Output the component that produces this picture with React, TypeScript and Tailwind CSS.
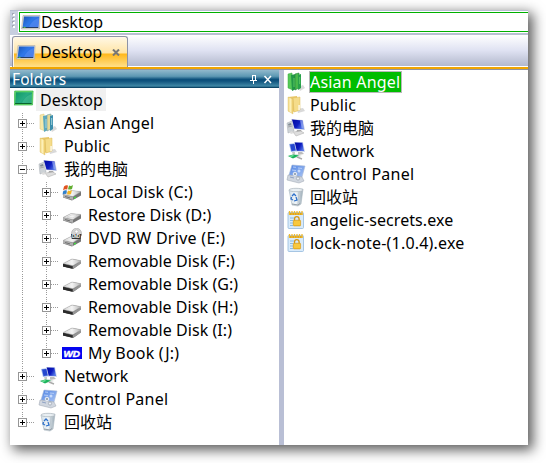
import React from "react";

const dots = "#9a9a9a";

function Defs() {
  return (
    <svg width="0" height="0" className="absolute">
      <defs>
        <linearGradient id="blueScreen" x1="0" y1="0" x2="1" y2="0.6">
          <stop offset="0" stopColor="#1a55b8" />
          <stop offset="0.55" stopColor="#2f78e8" />
          <stop offset="1" stopColor="#3b6be0" />
        </linearGradient>
        <linearGradient id="greenScreen" x1="0" y1="0" x2="1" y2="0.6">
          <stop offset="0" stopColor="#0f9a62" />
          <stop offset="0.6" stopColor="#27ab82" />
          <stop offset="1" stopColor="#139a66" />
        </linearGradient>
        <linearGradient id="navy" x1="0" y1="0" x2="1" y2="0.5">
          <stop offset="0" stopColor="#0008a0" />
          <stop offset="0.6" stopColor="#0d1cc0" />
          <stop offset="1" stopColor="#4f70e4" />
        </linearGradient>
        <linearGradient id="folder" x1="0" y1="0" x2="1" y2="0">
          <stop offset="0" stopColor="#f3d983" />
          <stop offset="0.5" stopColor="#fdf0b8" />
          <stop offset="1" stopColor="#edca62" />
        </linearGradient>
        <linearGradient id="disk" x1="0" y1="0" x2="1" y2="0">
          <stop offset="0" stopColor="#d4d4d4" />
          <stop offset="0.5" stopColor="#f4f4f4" />
          <stop offset="1" stopColor="#b5b5b5" />
        </linearGradient>
        <linearGradient id="diskDark" x1="0" y1="0" x2="1" y2="0">
          <stop offset="0" stopColor="#222" />
          <stop offset="0.5" stopColor="#444" />
          <stop offset="1" stopColor="#aaa" />
        </linearGradient>
        <linearGradient id="panel" x1="0" y1="0" x2="1" y2="1">
          <stop offset="0" stopColor="#4f83e2" />
          <stop offset="1" stopColor="#a9c4f4" />
        </linearGradient>
        <linearGradient id="bin" x1="0" y1="0" x2="1" y2="0">
          <stop offset="0" stopColor="#d3dfe8" />
          <stop offset="0.5" stopColor="#f1f6f9" />
          <stop offset="1" stopColor="#98a8b3" />
        </linearGradient>
      </defs>
    </svg>
  );
}

type Kind =
  | "screen" | "greenScreen" | "user" | "greenUser" | "folder" | "computer" | "network"
  | "panel" | "bin" | "winDisk" | "disk" | "dvd" | "usb" | "wd" | "lock";

function Drawing({ kind }: { kind: Kind }) {
  switch (kind) {
    case "screen":
      return (
        <>
          <path d="M2 3.5H19L18.500 17H.5z" fill="#dcdad4" stroke="#b4b2aa" strokeWidth=".7" />
          <path d="M3 4.500H18.300L17.500 15H1.700z" fill="url(#blueScreen)" />
          <path d="M8 15C10 10 14 7 18 6L17.300 15z" fill="#5b96f5" opacity=".5" />
          <path d="M1.600 15h15.800v1H1.500z" fill="#243c66" />
          <path d="M2.500 15.300h2" stroke="#59d34c" />
        </>
      );
    case "greenScreen":
      return (
        <>
          <path d="M.7 3h18.400l-.6 14H0z" fill="#6ddb6a" stroke="#35b64a" strokeWidth=".7" />
          <path d="M1.800 4.300H18l-.5 10.800H1.200z" fill="url(#greenScreen)" />
          <path d="M8 15C10 10 14 7 18 6l-.5 9z" fill="#4fc39c" opacity=".5" />
          <path d="M1.200 15h16.500v1H1z" fill="#08652c" />
        </>
      );
    case "user":
    case "greenUser": {
      const g = kind === "greenUser";
      return (
        <>
          <path d="M12 15l5-2 2 3-5 3z" fill="#bbb" opacity=".55" />
          <path d="M2 2l4-1 1 17-5-2z" fill={g ? "#55c957" : "#f7e8a9"} stroke={g ? "#36a83e" : "#dfc779"} strokeWidth=".5" />
          <path d="M5 3l5-1v15l-4 2z" fill={g ? "#229747" : "#5da8bd"} />
          <path d="M9 2l4-1v15l-4 2z" fill={g ? "#48b94b" : "#e5d896"} stroke={g ? "#20823a" : "#6b9da9"} strokeWidth=".6" />
          <path d="M12 3l3-1v14l-3 2z" fill={g ? "#28a14b" : "#3c8eac"} />
          <path d="M8 6v9M13.700 5v7" stroke={g ? "#69d269" : "#bee3e7"} strokeWidth=".8" />
        </>
      );
    }
    case "folder":
      return (
        <>
          <path d="M11 14l6-1 2 3-7 2z" fill="#b9b9b9" opacity=".55" />
          <path d="M2 2l9-1 1 15-8 1-2-1z" fill="#e8c667" />
          <path d="M7 3l7-1v13l-6 2z" fill="#f5dc8a" stroke="#dfbd5a" strokeWidth=".5" />
          <path d="M2 2l5 2v15l-5-3z" fill="url(#folder)" stroke="#dbbd66" strokeWidth=".4" />
          <path d="M12.500 10l1.200 0v5l-1.200 .5z" fill="#fff" />
        </>
      );
    case "computer":
      return (
        <>
          <path d="M1 5l5-2 2 10-6 2z" fill="#cdd2d6" stroke="#a5abb0" strokeWidth=".5" />
          <path d="M2 6l3-1 .5 2-3 .8z" fill="#808a93" />
          <path d="M2 9l4-1" stroke="#888" strokeWidth=".6" />
          <path d="M5 1l12 1 2 10-11-1z" fill="#cfd3e6" />
          <path d="M6 1.600l10.500.9 1.400 8.700-9.400-.8z" fill="url(#navy)" />
          <path d="M14 2.600l2.500.2 1.300 8-2-.2z" fill="#a7baf5" opacity=".6" />
          <path d="M11 12h4l1 2-6 1z" fill="#a6a6a6" />
          <path d="M7 14l8-1 3 2-8 3z" fill="#dedede" stroke="#a8a8a8" strokeWidth=".5" />
          <path d="M3 14l3-1 2 2-3 1z" fill="#ddd" />
        </>
      );
    case "network":
      return (
        <>
          <path d="M3 3l7-1 2 8-7 1z" fill="#9bb5ec" />
          <path d="M4 3.500l6-.7 1 6.500-5.500.7z" fill="#2547cf" />
          <path d="M8 1l9 0 2 10-9-.5z" fill="#ccd5ec" />
          <path d="M8.800 1.600l7.600.1 1.600 8.400-7.300-.4z" fill="url(#navy)" />
          <path d="M12 11h4l2 2-6 1z" fill="#bcbcbc" />
          <path d="M6 11h3v3H7z" fill="#c8c8c8" />
          <path d="M1 15l10-2 5 2-7 2z" fill="#d8dedb" />
          <path d="M2 15l5-1.500 6 1-6 3z" fill="#19b35b" />
          <path d="M3 15l4-1 1 1-3 1z" fill="#73df9b" />
          <path d="M11 16l5 2" stroke="#aaa" strokeWidth="1.5" />
        </>
      );
    case "panel":
      return (
        <>
          <path d="M6 1l13 1-3 11-13-2z" fill="url(#panel)" stroke="#a7b8d6" strokeWidth=".6" />
          <path d="M2 11l14 2 2 4-5 2-12-3z" fill="#d0d6df" stroke="#9ba3ae" strokeWidth=".5" />
          <path d="M7 3l3 .3M6 6l4 .5M12 4l4 .4" stroke="#b5cdf8" />
          <circle cx="13" cy="7" r="1.500" fill="#c9dcfb" />
          <circle cx="9" cy="10" r="1.800" fill="#9daab8" stroke="#edf2f8" />
          <circle cx="12" cy="14.500" r="1.600" fill="#eef1f5" stroke="#8c97a4" strokeWidth=".6" />
          <path d="M4 13l4 1" stroke="#8fa2c4" />
        </>
      );
    case "bin":
      return (
        <>
          <path d="M3 3l14-1-2 15-3 2-6-1z" fill="url(#bin)" stroke="#aab7c0" strokeWidth=".6" />
          <ellipse cx="10" cy="3" rx="7" ry="1.700" fill="#e9eff3" stroke="#a9b3ba" strokeWidth=".7" />
          <path d="M13 5l-1 12M15 5l-1.500 11" stroke="#b1bfc8" strokeWidth=".7" />
          <path d="M6 9l2-2 2 2M10 10l1 3-3 1M7 13l-2-1 .5-2" stroke="#2e70c9" strokeWidth="1.300" fill="none" />
          <path d="M6 17l6 1 2-1.500" stroke="#7e8890" strokeWidth=".8" fill="none" />
        </>
      );
    case "winDisk":
    case "disk":
    case "dvd":
      return (
        <>
          <path d="M1 12.500l8-4 10 1v4l-9 5-9-3z" fill="#757575" />
          <path d="M1 12.500l8-4 10 1-8 5z" fill="url(#disk)" stroke="#aaa" strokeWidth=".4" />
          <path d="M1 12.500l10 2.500v3L1 15.300z" fill="#b0b0b0" />
          <path d="M3 14.500l5 1.400" stroke="#555" strokeWidth=".7" />
          {kind === "disk" && <path d="M5 12.300l5-2.500 5 .6-4.500 2.500z" fill="#f3f3f3" stroke="#bbb" strokeWidth=".4" />}
          {kind !== "disk" && <path d="M12 16l2-.8" stroke="#43d840" strokeWidth="1.500" />}
          {kind === "winDisk" && (
            <>
              <path d="M2 4.500q2-2 4-1l-.8 4Q3 6.500 1 8.500z" fill="#e0521f" />
              <path d="M7 3.500q2 1 4-.5l-1 4q-2 1-4 .3z" fill="#62ae30" />
              <path d="M1 9.500q2-2 4-1l-.9 3.500q-2-.5-3.500.8z" fill="#3080cc" />
              <path d="M6 8.500q2 1 4-.5l-1 4q-2 1-4 .2z" fill="#f4b525" />
            </>
          )}
          {kind === "dvd" && (
            <>
              <ellipse cx="14.500" cy="5.500" rx="5" ry="5.300" fill="#d4d4d4" stroke="#a4a4a4" strokeWidth=".6" />
              <circle cx="14.500" cy="3.500" r="1.600" fill="#fff" stroke="#aaa" strokeWidth=".5" />
              <path d="M9 6h10.500l-1 5h-8.700z" fill="#333" />
              <text x="10" y="10.200" fontSize="4.500" textLength="8" fontWeight="bold" fill="#fff" fontFamily="Liberation Sans, sans-serif">DVD</text>
            </>
          )}
        </>
      );
    case "usb":
      return (
        <>
          <path d="M1 13l9-5 9 1.500v3L11 18 1 15.500z" fill="url(#diskDark)" />
          <path d="M1 12.500l9-4.500 9 1.700-8 5z" fill="url(#disk)" stroke="#aaa" strokeWidth=".5" />
          <path d="M1 13.300l9 2.200v2L1 15.500z" fill="#2b2b2b" />
          <path d="M11 15l8-4.500v2L11 18z" fill="#969696" />
        </>
      );
    case "wd":
      return (
        <>
          <path d="M0 4h20v12H0z" fill="#0505f0" />
          <text x="1.500" y="13.500" fontSize="9.500" textLength="16.500" lengthAdjust="spacingAndGlyphs" fontWeight="bold" fontStyle="italic" fill="#fff" stroke="#fff" strokeWidth=".5" fontFamily="Liberation Sans, sans-serif">WD</text>
        </>
      );
    case "lock":
      return (
        <>
          <rect x="2" y="2.500" width="15.500" height="16" rx="1" fill="#d9ebfb" stroke="#94b9dc" strokeWidth=".8" />
          <path d="M3 3h13.500v2H3z" fill="#d9a21c" />
          <path d="M3.500 1v4M6 1v4M8.500 1v4M11 1v4M13.500 1v4M16 1v4" stroke="#eeb932" strokeWidth="1.300" />
          <path d="M4 8h4M4 10.500h3M4 13h3M4 15.500h3" stroke="#75aee0" strokeWidth=".8" />
          <path d="M8.500 11V9a2.300 2.300 0 014.600 0v2" fill="none" stroke="#d69616" strokeWidth="1.300" />
          <rect x="7.300" y="10.200" width="7.300" height="5.700" rx=".7" fill="#f5bd29" stroke="#d49718" strokeWidth=".6" />
          <path d="M8 12h6M8 14h6" stroke="#ffdc69" strokeWidth=".7" />
        </>
      );
  }
}

function Icon({ kind }: { kind: Kind }) {
  return (
    <svg width="20" height="20" viewBox="0 0 20 20" className="shrink-0">
      <Drawing kind={kind} />
    </svg>
  );
}

/* One 24px indent column: vertical guide, optional branch with its expander. */
function Guide({ box, last, open }: { box?: boolean; last?: boolean; open?: boolean }) {
  return (
    <svg width="24" height="23" viewBox="0 0 24 23" shapeRendering="crispEdges" className="shrink-0">
      <path d={last ? "M12.5 1V12" : "M12.5 1V24"} stroke={dots} strokeDasharray="1 1" />
      {box && (
        <>
          <path d="M17 11.5H24" stroke={dots} strokeDasharray="1 1" />
          <rect x="8.5" y="7.5" width="8" height="8" fill="#fff" stroke="#969696" />
          <path d={open ? "M10 11.5h5" : "M10 11.5h5M12.5 9v5"} stroke="#000" />
        </>
      )}
    </svg>
  );
}

type Row = { label: string; kind: Kind; level: 1 | 2; open?: boolean; last?: boolean; tracking?: string };

const tree: Row[] = [
  { label: "Asian Angel", kind: "user", level: 1, tracking: "tracking-[0.2px]" },
  { label: "Public", kind: "folder", level: 1, tracking: "tracking-[0.1px]" },
  { label: "我的电脑", kind: "computer", level: 1, open: true },
  { label: "Local Disk (C:)", kind: "winDisk", level: 2, tracking: "tracking-[0.12px]" },
  { label: "Restore Disk (D:)", kind: "disk", level: 2 },
  { label: "DVD RW Drive (E:)", kind: "dvd", level: 2, tracking: "tracking-[0.28px]" },
  { label: "Removable Disk (F:)", kind: "usb", level: 2, tracking: "tracking-[0.05px]" },
  { label: "Removable Disk (G:)", kind: "usb", level: 2, tracking: "tracking-[0.05px]" },
  { label: "Removable Disk (H:)", kind: "usb", level: 2, tracking: "tracking-[0.03px]" },
  { label: "Removable Disk (I:)", kind: "usb", level: 2, tracking: "tracking-[0.05px]" },
  { label: "My Book (J:)", kind: "wd", level: 2, last: true, tracking: "tracking-[0.18px]" },
  { label: "Network", kind: "network", level: 1 },
  { label: "Control Panel", kind: "panel", level: 1, tracking: "tracking-[0.22px]" },
  { label: "回收站", kind: "bin", level: 1, last: true },
];

const files: { label: string; kind: Kind; tracking?: string }[] = [
  { label: "Asian Angel", kind: "greenUser", tracking: "tracking-[0.2px]" },
  { label: "Public", kind: "folder", tracking: "tracking-[0.1px]" },
  { label: "我的电脑", kind: "computer" },
  { label: "Network", kind: "network" },
  { label: "Control Panel", kind: "panel", tracking: "tracking-[0.22px]" },
  { label: "回收站", kind: "bin" },
  { label: "angelic-secrets.exe", kind: "lock", tracking: "tracking-[0.06px]" },
  { label: "lock-note-(1.0.4).exe", kind: "lock", tracking: "tracking-[0.19px]" },
];

export default function App() {
  return (
    <div className="h-[463px] w-[546px] overflow-hidden bg-white pt-[10px] pl-[10px] font-['Noto_Sans','Noto_Sans_CJK_SC',sans-serif] text-[16px] leading-[22px] whitespace-nowrap text-black">
      <Defs />
      <div className="flex h-[435px] w-[518px] flex-col bg-white shadow-[4px_4px_12px_1px_rgba(0,0,0,0.65)]">
        <div className="flex h-[25px] shrink-0 bg-[#b9c0d2] pt-px">
          <div className="flex w-[8px] flex-col items-center gap-[2px] bg-[#c7cedf] pt-[3px]">
            {[0, 1, 2, 3].map((i) => (
              <span key={i} className="h-[2px] w-[2px] bg-white shadow-[-1px_-1px_0_#a4a9b7]" />
            ))}
          </div>
          <div className="h-[22px] flex-1 border-t border-b border-l border-white">
            <div className="flex h-[20px] items-center border-y border-l border-[#00b000] bg-white pl-px">
              <Icon kind="screen" />
              <span>Desktop</span>
            </div>
          </div>
        </div>

        <div className="flex h-[31px] shrink-0 items-end bg-linear-to-b from-white via-[#dfe2f2] to-[#b3b9cd] pl-[2px]">
          <div className="z-10 -mb-px flex h-[31px] w-[116px] items-center rounded-t-[3px] border border-b-0 border-[#8e93a6] bg-linear-[180deg,#fff8e6_0%,#ffe4a4_54%,#ffb719_56%,#ffe08c_100%] pl-[3px] shadow-[inset_1px_1px_0_#fff8e8]">
            <Icon kind="screen" />
            <span className="ml-[4px]">Desktop</span>
            <svg width="8" height="7" viewBox="0 0 8 7" className="ml-[10px]">
              <path d="M1 .5l6 6M7 .5l-6 6" stroke="#777" strokeWidth="2" />
            </svg>
          </div>
        </div>
        <div className="h-[4px] shrink-0 border-t border-b border-t-white border-b-[#8f949f] bg-[#f0a500]" />

        <div className="flex min-h-0 flex-1">
          <div className="flex w-[269px] flex-col">
            <div className="flex h-[18px] shrink-0 items-center bg-linear-[180deg,#91b9cc_0%,#5d98b3_35%,#0d517c_52%,#0d517c_60%,#4189a7_90%,#0d4768_95%] pr-[7px] pl-[2px] text-white">
              <span className="text-[15.5px] tracking-[0.1px]">Folders</span>
              <svg width="22" height="9" viewBox="0 0 22 9" shapeRendering="crispEdges" className="ml-auto">
                <path d="M2 .5h4M2.5 0v5M5 0v5M0 5.5h7M3.5 5v4" stroke="#fff" fill="none" />
                <path d="M14.500 1l6.500 7M21 1l-6.500 7" stroke="#fff" strokeWidth="1.500" shapeRendering="auto" />
              </svg>
            </div>
            <div className="flex h-[24px] shrink-0 items-start pl-[4px]">
              <Icon kind="greenScreen" />
              <span className="ml-[2px] h-[23px] w-[70px] bg-[#f0f0f0] pl-[4px] leading-[24px] tracking-[0.1px]">Desktop</span>
            </div>
            {tree.map((r) => (
              <div key={r.label} className="flex h-[23px] shrink-0 items-center">
                {r.level === 2 && <Guide />}
                <Guide box open={r.open} last={r.last} />
                <div className="ml-[4px] flex h-[22px] items-center gap-[6px] self-start">
                  <Icon kind={r.kind} />
                  <span className={r.tracking}>{r.label}</span>
                </div>
              </div>
            ))}
          </div>
          <div className="w-[5px] bg-[#b9bfd5]" />
          <div className="flex flex-1 flex-col pt-px pl-[2px]">
            {files.map((f, i) => (
              <div key={f.label} className="mb-px flex h-[22px] items-center">
                <Icon kind={f.kind} />
                {i === 0 ? (
                  <span className="ml-[3px] h-[22px] w-[93px] border border-[#b8b8b8] bg-[#00bd00] leading-[21px] tracking-[0.2px] text-white">
                    {f.label}
                  </span>
                ) : (
                  <span className={`ml-[4px] ${f.tracking ?? ""}`}>{f.label}</span>
                )}
              </div>
            ))}
          </div>
        </div>
      </div>
    </div>
  );
}
